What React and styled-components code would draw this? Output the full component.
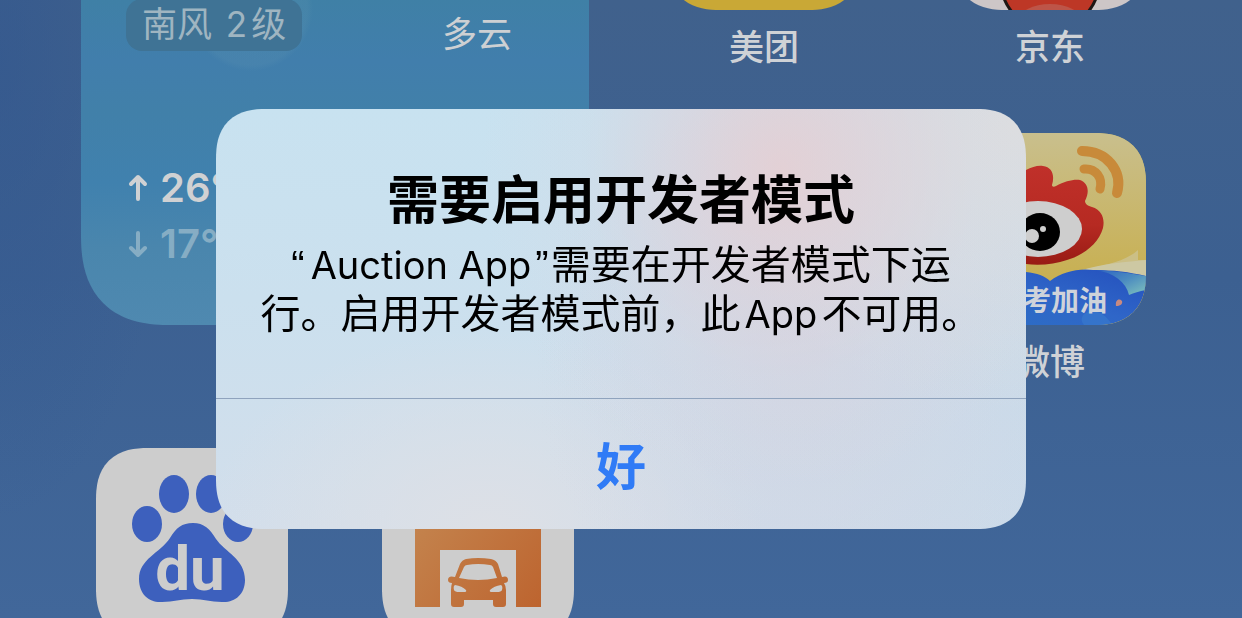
import styled, { createGlobalStyle, css } from 'styled-components'

function App() {
    return (
        <>
            <GlobalStyle/>
            <HomeScreen>
                <WeatherWidget>
                    <WeatherTop>
                        <Wind>南风 <Latin>2</Latin>级</Wind>
                        <Condition>多云</Condition>
                    </WeatherTop>
                    <Temperature>
                        <ArrowIcon/>
                        26°
                    </Temperature>
                    <Temperature $low>
                        <ArrowIcon down/>
                        17°
                    </Temperature>
                </WeatherWidget>

                <AppLink href="#meituan" $top>
                    <Tile $color="#c9a836"/>
                    <AppName>美团</AppName>
                </AppLink>
                <AppLink href="#jd" $top>
                    <Tile $color="#cdc6c7"><JdLogo/></Tile>
                    <AppName>京东</AppName>
                </AppLink>
                <AppLink href="#weibo" $column={4}>
                    <Tile $color="#c9b55f"><WeiboLogo/></Tile>
                    <AppName>微博</AppName>
                </AppLink>
                <AppLink href="#baidu" $column={1} aria-label="Baidu">
                    <Tile $color="#cdcdcd"><BaiduLogo/></Tile>
                </AppLink>
                <AppLink href="#garage" $column={2} aria-label="Garage">
                    <Tile $color="#cdcdcd"><GarageLogo/></Tile>
                </AppLink>
            </HomeScreen>

            <Overlay>
                <Alert role="alertdialog" aria-labelledby="alert-title" aria-describedby="alert-message">
                    <AlertBody>
                        <AlertTitle id="alert-title">需要启用开发者模式</AlertTitle>
                        <AlertMessage id="alert-message">
                            <Quote>“</Quote><Latin $size="38px">Auction App</Latin><Quote>”</Quote>需要在开发者模式下运
                            <br/>
                            行。启用开发者模式前，此<Latin $size="38px">App</Latin>不可用。
                        </AlertMessage>
                    </AlertBody>
                    <AlertButton type="button">好</AlertButton>
                </Alert>
            </Overlay>
        </>
    );
}

export default App

function ArrowIcon({ down }) {
    return (
        <Arrow viewBox="0 0 20 28" aria-hidden="true">
            <path d={down ? 'M10 3V25M3 18L10 25L17 18' : 'M10 25V3M3 10L10 3L17 10'}/>
        </Arrow>
    );
}

function JdLogo() {
    return (
        <Logo viewBox="0 0 192 192" aria-hidden="true">
            <circle cx="96" cy="163" r="49" fill="#bd3726" stroke="#1e1714" strokeWidth="3"/>
            <ellipse cx="96" cy="202" rx="31" ry="16" fill="#bd5548"/>
        </Logo>
    );
}

function WeiboLogo() {
    return (
        <Logo viewBox="0 0 192 192" aria-hidden="true">
            <defs>
                <linearGradient id="weiboBg" x1="0" y1="0" x2="0" y2="1">
                    <stop offset="0" stopColor="#c9bf8d"/>
                    <stop offset="0.75" stopColor="#c8b052"/>
                </linearGradient>
                <linearGradient id="weiboRed" x1="0" y1="0" x2="0" y2="1">
                    <stop offset="0" stopColor="#c0302a"/>
                    <stop offset="0.6" stopColor="#b62a22"/>
                    <stop offset="1" stopColor="#981b14"/>
                </linearGradient>
                <linearGradient id="weiboBlue" x1="0" y1="1" x2="1" y2="0">
                    <stop offset="0" stopColor="#2c6fc4"/>
                    <stop offset="0.5" stopColor="#2f66c8"/>
                    <stop offset="1" stopColor="#2450bd"/>
                </linearGradient>
                <linearGradient id="weiboTeal" x1="0" y1="0" x2="1" y2="1">
                    <stop offset="0" stopColor="#2c63c2"/>
                    <stop offset="0.5" stopColor="#4c8cc0"/>
                    <stop offset="1" stopColor="#80c3bd"/>
                </linearGradient>
            </defs>
            <rect width="192" height="192" fill="url(#weiboBg)"/>
            <path d="M128 18C153 18 169 38 163 60" fill="none" stroke="#c88a3a" strokeWidth="10" strokeLinecap="round"/>
            <path d="M130 36C142 35 149 45 146 56" fill="none" stroke="#c88a3a" strokeWidth="9" strokeLinecap="round"/>
            <path
                fill="url(#weiboRed)"
                d="M20 100C20 74 52 42 72 37C78 34 84 32 89 33C98 34 101 42 98 52C98 54 100 54 102 53C111 48 120 46 126 47C134 50 136 58 131 68C131 71 134 73 138 74C148 77 151 86 149 95C145 110 130 122 113 127C101 131 86 133 72 131C42 129 20 118 20 100Z"
            />
            <ellipse cx="84" cy="96" rx="44" ry="28" fill="#cecece"/>
            <ellipse cx="86" cy="99" rx="20" ry="19" fill="#000"/>
            <circle cx="78" cy="103" r="7" fill="#cecece"/>
            <circle cx="89" cy="96" r="3" fill="#cecece"/>
            <path d="M120 139C145 133 170 130 184 117V127L192 127V144Z" fill="#cbbf86"/>
            <path d="M125 138C150 130 172 129 192 127V146L140 142Z" fill="#cdc8a3"/>
            <path d="M0 148C20 136 45 136 72 139C83 140 91 143 96 148C108 139 124 135 139 137C160 137 175 139 192 143V192H0Z" fill="url(#weiboBlue)"/>
            <path d="M142 137C160 138 175 140 192 143V157C185 158 180 160 175 162C172 149 160 140 142 137Z" fill="url(#weiboTeal)"/>
            <path d="M130 192C120 180 145 168 158 192Z" fill="#3b7fd0" opacity="0.5"/>
            <path d="M162 173C161 167 165 165 168 168C169 171 166 173 162 173Z" fill="#c98a80"/>
            <WeiboBanner x="153" y="178" textAnchor="end">高考加油</WeiboBanner>
        </Logo>
    );
}

function BaiduLogo() {
    return (
        <Logo viewBox="0 0 192 192" aria-hidden="true">
            <g fill="#3d60bd">
                <ellipse cx="51" cy="76" rx="15" ry="18"/>
                <ellipse cx="78" cy="46" rx="15" ry="19"/>
                <ellipse cx="115" cy="46" rx="15" ry="19"/>
                <ellipse cx="142" cy="76" rx="15" ry="18"/>
                <path d="M97 75C108 75 114 81 120 91C129 104 149 111 149 132C149 147 138 155 126 154C114 154 108 151 96 151C84 151 78 154 66 154C54 155 43 147 43 131C43 111 64 105 74 90C80 80 86 75 97 75Z"/>
            </g>
            <BaiduText x="94" y="142" textAnchor="middle">du</BaiduText>
        </Logo>
    );
}

function GarageLogo() {
    return (
        <Logo viewBox="0 0 192 192" aria-hidden="true">
            <defs>
                <linearGradient id="garage" gradientUnits="userSpaceOnUse" x1="33" y1="60" x2="159" y2="159">
                    <stop offset="0" stopColor="#c4854f"/>
                    <stop offset="1" stopColor="#bd642f"/>
                </linearGradient>
            </defs>
            <g fill="url(#garage)" fillRule="evenodd">
                <path d="M33 159V62L96 32L159 62V159H134V102H58V159Z"/>
                <path
                    d="M73 129L78 116Q80 112 84 111Q96 109 109 111Q114 112 116 116L120 129Q126 127 126 132Q126 135 122 135Q124 138 124 142V156Q124 159 121 159H114Q111 159 111 156V152H82V156Q82 159 79 159H72Q69 159 69 156V142Q69 138 70 135Q66 135 66 132Q66 127 73 129Z
                    M77 130Q96 134 115 130L111 119Q110 117 108 117Q96 115 85 117Q83 117 82 119Z
                    M73 137Q71 138 72 142Q73 144 77 144H82Q85 144 84 142Q80 138 73 137Z
                    M119 137Q121 138 120 142Q119 144 115 144H110Q107 144 108 142Q112 138 119 137Z"
                />
            </g>
        </Logo>
    );
}

const GlobalStyle = createGlobalStyle`
* {
    box-sizing: border-box;
}

body {
    margin: 0;
    background: #3d6194;
    font-family: Inter, "Noto Sans CJK SC", sans-serif;
}
`;

// rounder, continuous corners where the browser has them
const smoothCorner = (radius, smoothRadius) => css`
    border-radius: ${radius};

    @supports (corner-shape: squircle) {
        border-radius: ${smoothRadius};
        corner-shape: superellipse(1.3);
    }
`;

const HomeScreen = styled.main`
    display: grid;
    grid-template-columns: repeat(4, 1fr);
    grid-template-rows: 133px 315px 1fr;
    height: 100vh;
    padding: 0 49px;
    overflow: hidden;
    background:
        radial-gradient(ellipse 180px 460px at 0 60px, rgba(46, 84, 144, 0.5), transparent),
        linear-gradient(180deg, #40618c 0%, #3c6091 45%, #41679a 100%);
`;

// the widget is square, its upper part runs out of the screen
const WeatherWidget = styled.section`
    grid-column: 1 / 3;
    grid-row: 1 / 3;
    align-self: end;
    display: flex;
    flex-direction: column;
    justify-content: flex-end;
    gap: 8px;
    height: 508px;
    margin: 0 32px 123px;
    padding: 0 77px 57px 45px;
    ${smoothCorner('80px', '90px')}
    background:
        radial-gradient(circle at 170px 192px, rgba(110, 160, 180, 0.14) 56px, transparent 62px),
        linear-gradient(180deg, #3f80a6 36%, #417eac 48%, #4180a9 58%, #4081ae 72%, #4a86ad 85%, #4f89b0 100%);
`;

const WeatherTop = styled.div`
    display: flex;
    justify-content: space-between;
    align-items: flex-end;
    margin-bottom: 105px;
    font-size: 35px;
    line-height: 34px;
`;

const Wind = styled.span`
    padding: 8px 16px 9px;
    border-radius: 16px;
    background: #3f7395;
    color: #9fb5c1;
`;

const Condition = styled.span`
    color: #cdd0d3;
`;

const Temperature = styled.div`
    display: flex;
    align-items: center;
    gap: 12px;
    padding-left: 2px;
    color: ${(props) => (props.$low ? '#86adc4' : '#d0d1d3')};
    font-size: 40px;
    font-weight: 600;
    line-height: 48px;
`;

const Arrow = styled.svg`
    width: 20px;
    height: 28px;
    fill: none;
    stroke: currentColor;
    stroke-width: 4;
    stroke-linecap: round;
    stroke-linejoin: round;
`;

const AppLink = styled.a`
    display: flex;
    flex-direction: column;
    align-items: center;
    align-self: ${(props) => (props.$top ? 'end' : 'start')};
    grid-column: ${(props) => props.$column || 'auto'};
    height: 315px;
    color: #cfd2d6;
    text-decoration: none;
`;

const Tile = styled.span`
    display: block;
    flex: none;
    width: 192px;
    height: 192px;
    ${smoothCorner('44px', '52px')}
    overflow: hidden;
    background: ${(props) => props.$color};
`;

const Logo = styled.svg`
    display: block;
    width: 100%;
    height: 100%;
`;

const AppName = styled.span`
    margin-top: 16px;
    font-size: 35px;
    font-weight: 500;
    line-height: 42px;
`;

const WeiboBanner = styled.text`
    fill: #cfd3da;
    font-size: 28px;
    font-weight: 700;
`;

const BaiduText = styled.text`
    fill: #cdcdcd;
    font-family: Roboto, sans-serif;
    font-size: 62px;
    font-weight: 700;
`;

const Overlay = styled.div`
    position: fixed;
    inset: 0;
    display: flex;
    align-items: center;
    justify-content: center;
    padding-top: 20px;
`;

const Alert = styled.div`
    width: 810px;
    max-width: 100%;
    ${smoothCorner('44px', '50px')}
    overflow: hidden;
    background:
        radial-gradient(ellipse 300px 320px at 565px 60px, rgba(230, 206, 210, 0.85), rgba(227, 208, 214, 0.6) 30%, rgba(220, 214, 223, 0.22) 65%, transparent),
        radial-gradient(ellipse 320px 280px at 800px 20px, #dcdee0, rgba(220, 222, 224, 0.5) 50%, transparent),
        radial-gradient(ellipse 260px 280px at 580px 260px, rgba(212, 210, 223, 0.6), transparent),
        radial-gradient(ellipse 280px 200px at 270px 421px, #dde0e6, transparent),
        linear-gradient(90deg, transparent 40%, rgba(200, 216, 232, 0.6)),
        linear-gradient(180deg, #c8e2f0 0%, #cbe0ee 45%, #d2deeb 100%);
`;

const AlertBody = styled.div`
    padding: 61px 40px 60px;
    border-bottom: 1px solid #8fa3bd;
    color: #000;
    text-align: center;
`;

const AlertTitle = styled.h1`
    margin: 0;
    font-size: 52px;
    font-weight: 600;
    line-height: 62px;
`;

const AlertMessage = styled.p`
    margin: 8px 0 0;
    font-size: 40px;
    line-height: 49px;
    white-space: nowrap;
`;

const Latin = styled.span`
    margin: 0 4px;
    font-size: ${(props) => props.$size || 'inherit'};
    line-height: 1;
`;

const Quote = styled.span`
    margin-right: 2px;
    font-family: "Liberation Sans", sans-serif;
    line-height: 1;
`;

const AlertButton = styled.button`
    display: block;
    width: 100%;
    height: 130px;
    padding: 0 0 2px;
    border: none;
    background: transparent;
    color: #307bf6;
    font-family: inherit;
    font-size: 50px;
    font-weight: 600;
    cursor: pointer;
`;
